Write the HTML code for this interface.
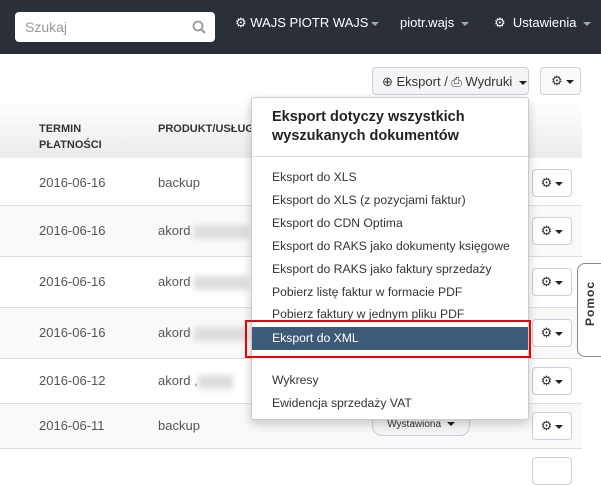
<!DOCTYPE html>
<html><head><meta charset="utf-8"><style>
*{box-sizing:border-box;margin:0;padding:0}
body{width:601px;height:464px;overflow:hidden;background:#fff;font-family:"Liberation Sans",sans-serif;position:relative;color:#333}
.nav{position:absolute;left:0;top:0;width:601px;height:54px;background:#2b3038}
.search{position:absolute;left:15px;top:12px;width:200px;height:30px;background:#fff;border-radius:4px;font-size:14px;color:#999;padding:7px 10px}
.nav .t{position:absolute;top:15px;color:#fff;font-size:13px}
.car{display:inline-block;width:0;height:0;border-left:4px solid transparent;border-right:4px solid transparent;border-top:4px solid #9aa;vertical-align:middle;margin-left:3px}
.carb{display:inline-block;width:0;height:0;border-left:4px solid transparent;border-right:4px solid transparent;border-top:4px solid #222;vertical-align:middle;margin-left:3px}
.hdr{position:absolute;left:0;top:100px;width:582px;height:58px;background:linear-gradient(#fff,#ebebeb)}
.th{position:absolute;font-size:11px;font-weight:bold;color:#333;line-height:16px}
.row{position:absolute;left:0;width:582px;border-bottom:1px solid #ddd}
.g{background:#f9f9f9}
.cell{position:absolute;font-size:13px;color:#555}
.gear{position:absolute;left:532px;width:40px;height:28px;border:1px solid #ccd;border-radius:4px;background:#fff;font-size:13px;text-align:center;padding-top:5px;color:#333}
.btn{position:absolute;border:1px solid #ccd;border-radius:4px;background:#f4f5f6;font-size:13px;color:#333}
.dd{position:absolute;left:251px;top:97px;width:278px;height:323px;background:#fff;border:1px solid #ccc;border-radius:3px;box-shadow:0 4px 10px rgba(0,0,0,.2)}
.it{position:absolute;left:20px;font-size:12.2px;color:#333}
.blur{position:absolute;height:14px;background:#ddd;filter:blur(3px)}
</style></head><body>
<div class="nav">
<div class="search">Szukaj<svg style="position:absolute;right:9px;top:8px" width="14" height="14" viewBox="0 0 14 14"><circle cx="6" cy="6" r="4.5" fill="none" stroke="#999" stroke-width="1.8"/><line x1="9.3" y1="9.3" x2="13" y2="13" stroke="#999" stroke-width="2"/></svg></div>
<div class="t" style="left:235px">&#9881; WAJS PIOTR WAJS<span class="car"></span></div>
<div class="t" style="left:400px">piotr.wajs <span class="car"></span></div>
<div class="t" style="left:494px">&#9881;&nbsp; Ustawienia <span class="car"></span></div>
</div>
<div class="btn" style="left:372px;top:67px;width:157px;height:28px;padding:6px 0 0 9px">&#8853; Eksport / &#9113; Wydruki <span class="carb"></span></div>
<div class="btn" style="left:540px;top:67px;width:41px;height:28px;padding:5px 0 0 10px;background:#fafafa">&#9881;<span class="carb"></span></div>
<div class="hdr"></div>
<div class="th" style="left:39px;top:121px">TERMIN<br>PŁATNOŚCI</div>
<div class="th" style="left:158px;top:121px">PRODUKT/USŁUG</div>
<div class="row" style="top:158px;height:48px"></div>
<div class="row g" style="top:206px;height:51px"></div>
<div class="row" style="top:257px;height:51px"></div>
<div class="row g" style="top:308px;height:51px"></div>
<div class="row" style="top:359px;height:45px"></div>
<div class="row g" style="top:404px;height:45px"></div>
<div class="cell" style="left:39px;top:175px">2016-06-16</div><div class="cell" style="left:158px;top:175px">backup</div>
<div class="cell" style="left:39px;top:223px">2016-06-16</div><div class="cell" style="left:158px;top:223px">akord</div><div class="blur" style="left:194px;top:225px;width:55px"></div>
<div class="cell" style="left:39px;top:274px">2016-06-16</div><div class="cell" style="left:158px;top:274px">akord</div><div class="blur" style="left:194px;top:276px;width:55px"></div>
<div class="cell" style="left:39px;top:325px">2016-06-16</div><div class="cell" style="left:158px;top:325px">akord</div><div class="blur" style="left:194px;top:327px;width:55px"></div>
<div class="cell" style="left:39px;top:373px">2016-06-12</div><div class="cell" style="left:158px;top:373px">akord ,</div><div class="blur" style="left:198px;top:375px;width:35px"></div>
<div class="cell" style="left:39px;top:418px">2016-06-11</div><div class="cell" style="left:158px;top:418px">backup</div>
<div class="gear" style="top:169px">&#9881;<span class="carb"></span></div>
<div class="gear" style="top:217px">&#9881;<span class="carb"></span></div>
<div class="gear" style="top:268px">&#9881;<span class="carb"></span></div>
<div class="gear" style="top:319px">&#9881;<span class="carb"></span></div>
<div class="gear" style="top:367px">&#9881;<span class="carb"></span></div>
<div class="gear" style="top:412px">&#9881;<span class="carb"></span></div>
<div class="gear" style="top:457px"></div>
<div class="btn" style="left:372px;top:412px;width:98px;height:24px;border-radius:10px;font-size:10px;padding:6px 0 0 0;text-align:center">Wystawiona <span class="carb"></span></div>
<div style="position:absolute;left:577px;top:263px;width:30px;height:94px;border:1px solid #888;border-radius:8px 0 0 8px;background:#fff"><div style="position:absolute;transform:rotate(-90deg);transform-origin:left top;font-size:12px;font-weight:bold;letter-spacing:1px;color:#333;width:60px;top:62px;left:5px">Pomoc</div></div>
<div class="dd">
<div style="position:absolute;left:20px;top:10px;font-size:14.5px;font-weight:bold;color:#222;line-height:19px">Eksport dotyczy wszystkich<br>wyszukanych dokumentów</div>
<div style="position:absolute;left:0;top:58px;width:276px;border-top:1px solid #ddd"></div>
<div class="it" style="top:72px">Eksport do XLS</div>
<div class="it" style="top:95px">Eksport do XLS (z pozycjami faktur)</div>
<div class="it" style="top:118px">Eksport do CDN Optima</div>
<div class="it" style="top:141px">Eksport do RAKS jako dokumenty księgowe</div>
<div class="it" style="top:164px">Eksport do RAKS jako faktury sprzedaży</div>
<div class="it" style="top:187px">Pobierz listę faktur w formacie PDF</div>
<div class="it" style="top:209px">Pobierz faktury w jednym pliku PDF</div>
<div style="position:absolute;left:0;top:229px;width:276px;height:23px;background:#3d5a78"></div>
<div class="it" style="top:233px;color:#fff">Eksport do XML</div>
<div class="it" style="top:275px">Wykresy</div>
<div class="it" style="top:298px">Ewidencja sprzedaży VAT</div>
</div>
<div style="position:absolute;left:245px;top:320px;width:286px;height:38px;border:2px solid #e00"></div>
</body></html>
